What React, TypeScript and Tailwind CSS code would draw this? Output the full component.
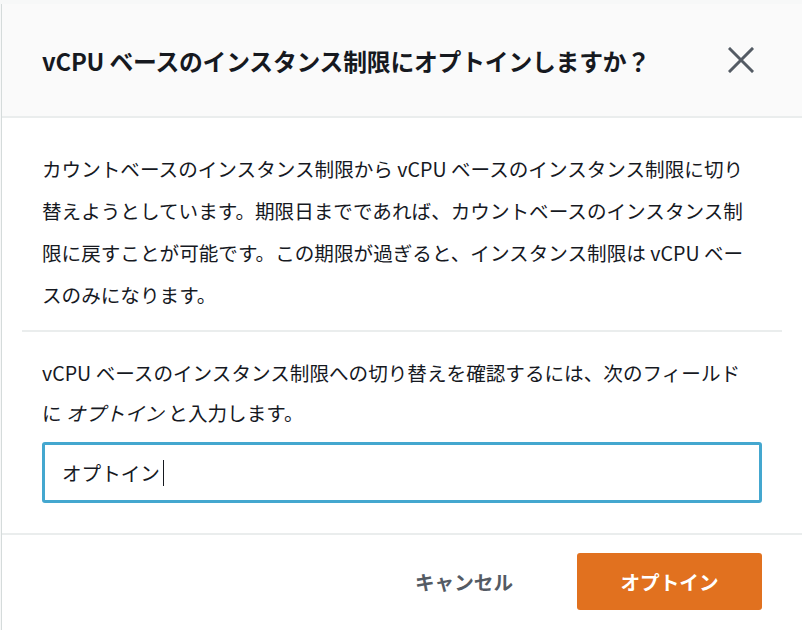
import React from 'react'

export default function App() {
  return (
    <div
      className="w-[802px] h-[630px] overflow-hidden bg-[#f7f8f8] text-[#16191f]"
      style={{ fontFamily: '"Noto Sans CJK JP", "Noto Sans", sans-serif' }}
    >
      {/* page behind the modal peeks out above it */}
      <div className="h-[4px]" />

      <div className="ml-px border-l border-[#d5dbdb] bg-white h-[626px] flex flex-col">
        {/* Header */}
        <div className="h-[114px] shrink-0 bg-[#fafafa] border-b-2 border-[#eaeded] flex items-center justify-between pl-[40px] pr-[48px]">
          <h2 className="text-[23.8px] font-bold leading-none tracking-[-0.2px] mt-[2px]">
            vCPU ベースのインスタンス制限にオプトインしますか？
          </h2>
          <svg width="26" height="26" viewBox="0 0 26 26" className="text-[#545b64]">
            <path d="M2 2 L24 24 M24 2 L2 24" stroke="currentColor" strokeWidth="3" strokeLinecap="square" />
          </svg>
        </div>

        {/* Body */}
        <div className="px-[20px]">
          <p className="px-[20px] pt-[30px] pb-[14px] text-[19.6px] leading-[42px]">
            カウントベースのインスタンス制限から vCPU ベースのインスタンス制限に切り
            <br />
            替えようとしています。期限日までであれば、カウントベースのインスタンス制
            <br />
            限に戻すことが可能です。この期限が過ぎると、インスタンス制限は vCPU ベー
            <br />
            スのみになります。
          </p>
          <div className="h-[2px] bg-[#eaeded]" />
          <div className="px-[20px] pt-[21px] pb-[30px]">
            <p className="text-[19.6px] leading-[40px]">
              vCPU ベースのインスタンス制限への切り替えを確認するには、次のフィールド
              <br />
              に <em className="italic">オプトイン</em> と入力します。
            </p>
            <div className="mt-[9px] h-[61px] border-[3px] border-[#44a7cf] rounded-[3px] flex items-center pl-[17px] text-[19.6px]">
              <span>オプトイン</span>
              <span className="ml-[3px] w-px h-[26px] bg-[#16191f]" />
            </div>
          </div>
        </div>

        {/* Footer */}
        <div className="border-t-2 border-[#eaeded] flex justify-end items-center gap-[34px] pt-[18px] pr-[40px]">
          <button className="h-[57px] px-[30px] text-[19.6px] font-bold text-[#545b64]">キャンセル</button>
          <button className="h-[57px] w-[185px] rounded-[3px] bg-[#e1711f] text-white text-[19.6px] font-bold">
            オプトイン
          </button>
        </div>
      </div>
    </div>
  )
}
